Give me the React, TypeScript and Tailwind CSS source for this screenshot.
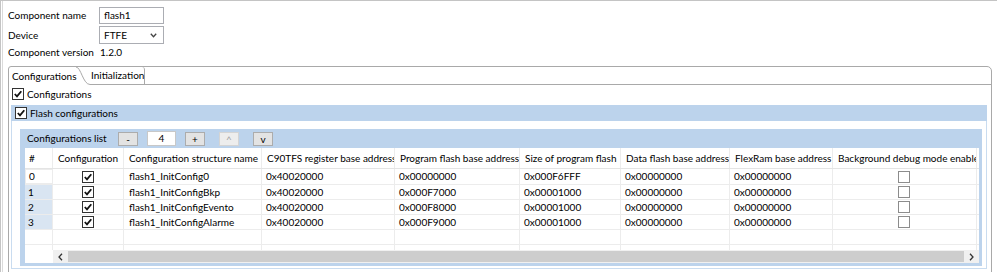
import React from "react";

const cols = [
  { key: "num", title: "#", w: 28, align: "left" },
  { key: "cfg", title: "Configuration", w: 71, align: "center" },
  { key: "name", title: "Configuration structure name", w: 138, align: "left" },
  { key: "c90", title: "C90TFS register base address", w: 133, align: "left" },
  { key: "pflash", title: "Program flash base address", w: 125, align: "left" },
  { key: "size", title: "Size of program flash", w: 101, align: "left" },
  { key: "dflash", title: "Data flash base address", w: 109, align: "left" },
  { key: "flex", title: "FlexRam base address", w: 103, align: "left" },
  { key: "bdm", title: "Background debug mode enable", w: 144, align: "left" },
];

const rows = [
  { name: "flash1_InitConfig0", pflash: "0x00000000", size: "0x000F6FFF" },
  { name: "flash1_InitConfigBkp", pflash: "0x000F7000", size: "0x00001000" },
  { name: "flash1_InitConfigEvento", pflash: "0x000F8000", size: "0x00001000" },
  { name: "flash1_InitConfigAlarme", pflash: "0x000F9000", size: "0x00001000" },
];

function Check({ checked }: { checked: boolean }) {
  return (
    <span
      className={`inline-flex h-[12px] w-[12px] shrink-0 items-center justify-center border bg-white ${
        checked ? "border-[#333333]" : "border-[#8c8c8c]"
      }`}
    >
      {checked && (
        <svg width="10" height="10" viewBox="0 0 10 10">
          <path d="M1.8 5 L4 7.4 L8.3 2.2" fill="none" stroke="#111" strokeWidth="1.8" />
        </svg>
      )}
    </span>
  );
}

function SmallButton({ label, disabled }: { label: string; disabled?: boolean }) {
  return (
    <span
      className={`flex h-[14px] w-[20px] items-center justify-center border text-[10px] leading-none ${
        disabled
          ? "border-[#d4d4d4] bg-[#ededed] text-[#a0a0a0]"
          : "border-[#acacac] bg-[#e3e3e3] text-black"
      }`}
    >
      {label}
    </span>
  );
}

function Cell({ w, children, className = "" }: { w: number; children?: React.ReactNode; className?: string }) {
  return (
    <div
      className={`flex h-full shrink-0 items-center overflow-hidden whitespace-nowrap border-r border-[#ececec] ${className}`}
      style={{ width: w }}
    >
      {children}
    </div>
  );
}

function ConfigTable() {
  return (
    <div className="flex h-[115px] flex-col overflow-hidden bg-white">
      <div className="flex h-[21px] shrink-0 border-b border-[#e4e4e4]">
        {cols.map((c) => (
          <Cell
            key={c.key}
            w={c.w}
            className={c.align === "center" ? "justify-center" : c.key === "num" ? "pl-[4px]" : "pl-[5px]"}
          >
            {c.title}
          </Cell>
        ))}
      </div>
      {rows.map((r, i) => (
        <div
          key={r.name}
          className={`flex shrink-0 border-b border-[#ececec] ${i === 0 ? "h-[16px]" : "h-[15px]"}`}
        >
          <Cell
            w={28}
            className={`pl-[3px] ${i === 0 ? "border border-[#cfcfcf] bg-white" : "bg-[#d9e5f2]"}`}
          >
            {i}
          </Cell>
          <Cell w={71} className="justify-center">
            <Check checked />
          </Cell>
          <Cell w={138} className="pl-[5px]">
            {r.name}
          </Cell>
          <Cell w={133} className="pl-[4px]">
            0x40020000
          </Cell>
          <Cell w={125} className="pl-[4px]">
            {r.pflash}
          </Cell>
          <Cell w={101} className="pl-[4px]">
            {r.size}
          </Cell>
          <Cell w={109} className="pl-[4px]">
            0x00000000
          </Cell>
          <Cell w={103} className="pl-[4px]">
            0x00000000
          </Cell>
          <Cell w={144} className="justify-center pr-[2px]">
            <Check checked={false} />
          </Cell>
        </div>
      ))}
      <div className="flex h-[15px] shrink-0 border-b border-[#ececec]">
        {cols.map((c) => (
          <Cell key={c.key} w={c.w} />
        ))}
      </div>
      <div className="flex h-[5px] shrink-0">
        {cols.map((c) => (
          <Cell key={c.key} w={c.w} />
        ))}
      </div>
      <div className="flex h-[13px] shrink-0">
        <div className="w-[28px] shrink-0 bg-white" />
        <div className="flex flex-1 items-center bg-[#f0f0f0]">
          <span className="flex w-[15px] justify-center">
            <svg width="5" height="8" viewBox="0 0 5 8">
              <path d="M4 0.8 L1 4 L4 7.2" fill="none" stroke="#333" strokeWidth="1.3" />
            </svg>
          </span>
          <span className="h-[11px] flex-1 bg-[#cdcdcd]" />
          <span className="flex w-[15px] justify-center">
            <svg width="5" height="8" viewBox="0 0 5 8">
              <path d="M1 0.8 L4 4 L1 7.2" fill="none" stroke="#333" strokeWidth="1.3" />
            </svg>
          </span>
        </div>
      </div>
    </div>
  );
}

export default function App() {
  return (
    <div className="h-[272px] w-[997px] overflow-hidden whitespace-nowrap border-l border-t border-[#c4c4c4] bg-white font-['Lato','Liberation_Sans',sans-serif] text-[10px] text-black">
      <div className="ml-px h-full border-l border-[#dadada] pl-[5px] pt-[6px]">
        {/* component form */}
        <div className="flex h-[17px] items-center">
          <span className="w-[91px]">Component name</span>
          <span className="flex h-[17px] w-[65px] items-center border border-[#abadb3] pl-[4px]">flash1</span>
        </div>
        <div className="mt-[2px] flex h-[18px] items-center">
          <span className="w-[91px]">Device</span>
          <span className="flex h-[18px] w-[65px] items-center justify-between border border-[#abadb3] pl-[4px] pr-[6px]">
            FTFE
            <svg width="7" height="5" viewBox="0 0 7 5">
              <path d="M0.8 0.8 L3.5 3.8 L6.2 0.8" fill="none" stroke="#444" strokeWidth="1.3" />
            </svg>
          </span>
        </div>
        <div className="flex h-[16px] items-center">
          <span className="w-[92px]">Component version</span>
          <span>1.2.0</span>
        </div>

        {/* tab folder */}
        <div className="mt-[6px] h-[220px] w-[984px] rounded-tl-[3px] rounded-tr-[5px] border border-[#a9a9a9]">
          <div className="flex h-[18px]">
            <div className="flex w-[67px] items-center pl-[3px]">Configurations</div>
            <svg width="14" height="18" viewBox="0 0 14 18" className="shrink-0">
              <path d="M0 0 C5 0 7 17.5 14 17.5" fill="none" stroke="#a9a9a9" strokeWidth="1" />
            </svg>
            <div className="flex w-[55px] items-center rounded-tr-[3px] border-b border-r border-[#a9a9a9] pl-[1px]">
              Initialization
            </div>
            <div className="flex-1 border-b border-[#a9a9a9]" />
          </div>

          <div className="pl-[3px] pt-[3px]">
            <div className="flex h-[12px] items-center gap-[3px]">
              <Check checked />
              <span>Configurations</span>
            </div>
          </div>

          {/* flash configurations group */}
          <div className="ml-[2px] mt-[5px] w-[976px]">
            <div className="flex h-[16px] items-center gap-[3px] bg-[#bcd3ec] pl-[4px]">
              <Check checked />
              <span>Flash configurations</span>
            </div>
            <div className="border-b border-l border-r border-[#c9dcf0] pb-[2px] pl-[8px] pr-[4px] pt-[8px]">
              <div className="bg-[#bcd3ec] pb-[3px] pl-[5px] pr-[3px]">
                <div className="flex h-[19px] items-center">
                  <span className="w-[93px] pl-[2px]">Configurations list</span>
                  <SmallButton label="-" />
                  <span className="ml-[9px] flex h-[15px] w-[29px] items-center justify-center border border-[#c8c8c8] bg-white">
                    4
                  </span>
                  <span className="ml-[9px]">
                    <SmallButton label="+" />
                  </span>
                  <span className="ml-[14px]">
                    <SmallButton label="^" disabled />
                  </span>
                  <span className="ml-[14px]">
                    <SmallButton label="v" />
                  </span>
                </div>
                <ConfigTable />
              </div>
            </div>
          </div>
        </div>
      </div>
    </div>
  );
}
